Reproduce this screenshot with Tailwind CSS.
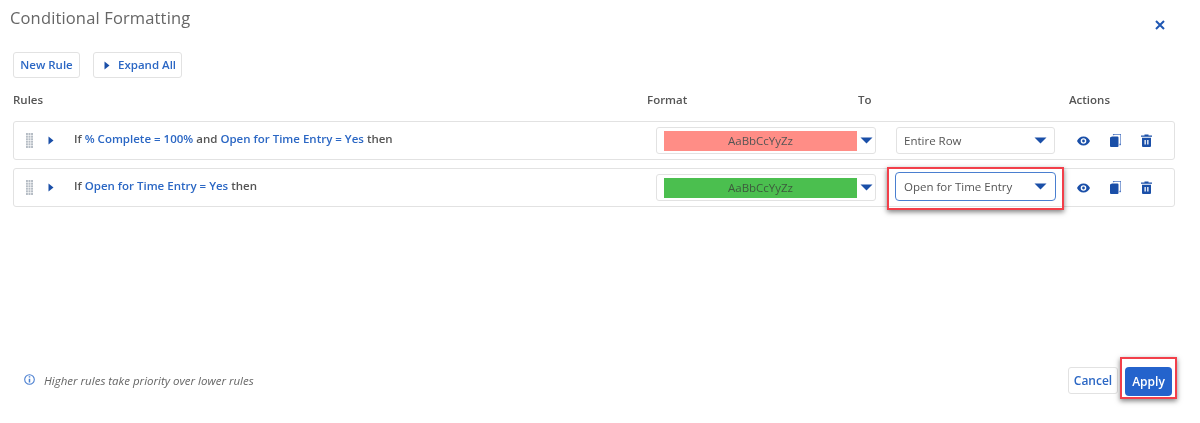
<!DOCTYPE html>
<html>
<head>
<meta charset="utf-8">
<script src="https://cdn.jsdelivr.net/npm/@tailwindcss/browser@4"></script>
</head>
<body class="bg-white">
<div class="relative w-[1200px] h-[423px] overflow-hidden bg-white font-['Open_Sans',sans-serif] text-[#4a4a4a] blur-[0.6px]">
  <header class="flex justify-between h-[52px] pl-[10px] pr-[34px]">
    <h1 class="text-[16.5px] leading-[22px] pt-[7px] text-[#666] font-normal tracking-[0.15px]">Conditional Formatting</h1>
    <svg class="mt-[19px]" width="12" height="12" viewBox="0 0 12 12"><path d="M2 2l8 8M10 2l-8 8" stroke="#1f57b3" stroke-width="2" fill="none"/></svg>
  </header>
  <div class="flex gap-[13px] pl-[13px] h-[26px]">
    <button class="w-[67px] h-[26px] rounded-[3px] border border-[#e2e2e2] text-[11.5px] font-semibold text-[#2b67c4]">New Rule</button>
    <button class="w-[89px] h-[26px] rounded-[3px] border border-[#e2e2e2] text-[11.5px] font-semibold text-[#2b67c4] flex items-center pl-[10px] gap-[8px]">
      <svg width="6" height="9" viewBox="0 0 6 9"><path d="M0.500 0.500L5.500 4.500L0.500 8.500Z" fill="#1a4fa8"/></svg>Expand All
    </button>
  </div>
  <div class="flex h-[43px] items-center pl-[13px] pt-[1px] text-[11.5px] font-semibold text-[#555]">
    <span class="w-[634px]">Rules</span>
    <span class="w-[211px]">Format</span>
    <span class="w-[211px]">To</span>
    <span>Actions</span>
  </div>
  <div class="flex flex-col gap-[8px] pl-[13px] w-[1175px]">
    <div class="flex items-center h-[39px] rounded-[3px] border border-[#e2e2e2]">
      <svg class="ml-[12px]" width="7" height="15" viewBox="0 0 7 15"><path d="M0 0h7v15H0z" fill="#b5bcc4"/><path d="M0 2.500h7M0 5h7M0 7.500h7M0 10h7M0 12.500h7M2.300 0v15M4.600 0v15" stroke="#fff" stroke-width=".6"/></svg>
      <svg class="ml-[15px]" width="6" height="9" viewBox="0 0 6 9"><path d="M0.500 0.500L5.500 4.500L0.500 8.500Z" fill="#1a4fa8"/></svg>
      <p class="w-[602px] pl-[20px] text-[11.5px] font-semibold text-[#555] -mt-[3px]">If <span class="text-[#2b67c4]">% Complete = 100%</span> and <span class="text-[#2b67c4]">Open for Time Entry = Yes</span> then</p>
      <div class="flex items-center w-[220px] h-[27px] rounded-[3px] border border-[#e2e2e2] pl-[7px]">
        <div class="w-[193px] h-[20px] bg-[#ff8d86] text-center text-[11.5px] leading-[20px] text-[#555]">AaBbCcYyZz</div>
        <svg class="ml-[3px]" width="13" height="7" viewBox="0 0 13 7"><path d="M0.500 0.500h12L6.500 6.500Z" fill="#1a4fa8"/></svg>
      </div>
      <div class="flex items-center justify-between ml-[20px] w-[159px] h-[27px] rounded-[3px] border border-[#e2e2e2] pl-[7px] pr-[7px] text-[11.5px] text-[#555]">Entire Row
        <svg width="13" height="7" viewBox="0 0 13 7"><path d="M0.500 0.500h12L6.500 6.500Z" fill="#1a4fa8"/></svg>
      </div>
      <div class="flex items-center ml-[22px] gap-[20px]">
        <svg width="13" height="10" viewBox="0 0 13 10"><path fill-rule="evenodd" d="M6.500 0.500C3.500 0.500 1.200 2.400 0 5c1.200 2.600 3.500 4.500 6.500 4.500S11.800 7.600 13 5C11.800 2.400 9.500 0.500 6.500 0.500zM6.500 7.800a2.800 2.800 0 1 1 0-5.600 2.800 2.800 0 0 1 0 5.600zM6.500 6.400a1.400 1.400 0 1 0 0-2.800 1.400 1.400 0 0 0 0 2.800z" fill="#1a4fa8"/></svg>
        <svg width="11" height="13" viewBox="0 0 11 13"><path d="M0 3.500l2-1h5.500a1 1 0 0 1 1 1V12a1 1 0 0 1-1 1H1a1 1 0 0 1-1-1z" fill="#1a4fa8"/><path d="M3.500 1.200V1a1 1 0 0 1 1-1H10a1 1 0 0 1 1 1v8.500a1 1 0 0 1-1 1h-.6" fill="none" stroke="#4f78c4" stroke-width="1.300"/></svg>
        <svg width="11" height="13" viewBox="0 0 11 13"><path fill-rule="evenodd" d="M0 1.500h3.500V0.500h4v1H11v1.300H0zM1 3.800h9V12a1 1 0 0 1-1 1H2a1 1 0 0 1-1-1zM3.500 6v4.500h1.300V6zM6.200 6v4.500h1.300V6z" fill="#1a4fa8"/></svg>
      </div>
    </div>
    <div class="flex items-center h-[39px] rounded-[3px] border border-[#e2e2e2]">
      <svg class="ml-[12px]" width="7" height="15" viewBox="0 0 7 15"><path d="M0 0h7v15H0z" fill="#b5bcc4"/><path d="M0 2.500h7M0 5h7M0 7.500h7M0 10h7M0 12.500h7M2.300 0v15M4.600 0v15" stroke="#fff" stroke-width=".6"/></svg>
      <svg class="ml-[15px]" width="6" height="9" viewBox="0 0 6 9"><path d="M0.500 0.500L5.500 4.500L0.500 8.500Z" fill="#1a4fa8"/></svg>
      <p class="w-[602px] pl-[20px] text-[11.5px] font-semibold text-[#555] -mt-[3px]">If <span class="text-[#2b67c4]">Open for Time Entry = Yes</span> then</p>
      <div class="flex items-center w-[220px] h-[27px] rounded-[3px] border border-[#e2e2e2] pl-[7px]">
        <div class="w-[193px] h-[20px] bg-[#4bbf4f] text-center text-[11.5px] leading-[20px] text-[#3d5a3d]">AaBbCcYyZz</div>
        <svg class="ml-[3px]" width="13" height="7" viewBox="0 0 13 7"><path d="M0.500 0.500h12L6.500 6.500Z" fill="#1a4fa8"/></svg>
      </div>
      <div class="flex items-center justify-between ml-[19px] w-[161px] h-[29px] -mt-[2px] rounded-[4px] border border-[#4a7fd0] pl-[8px] pr-[8px] text-[11.5px] text-[#555]">Open for Time Entry
        <svg width="13" height="7" viewBox="0 0 13 7"><path d="M0.500 0.500h12L6.500 6.500Z" fill="#1a4fa8"/></svg>
      </div>
      <div class="flex items-center ml-[21px] gap-[20px]">
        <svg width="13" height="10" viewBox="0 0 13 10"><path fill-rule="evenodd" d="M6.500 0.500C3.500 0.500 1.200 2.400 0 5c1.200 2.600 3.500 4.500 6.500 4.500S11.800 7.600 13 5C11.800 2.400 9.500 0.500 6.500 0.500zM6.500 7.800a2.800 2.800 0 1 1 0-5.600 2.800 2.800 0 0 1 0 5.600zM6.500 6.400a1.400 1.400 0 1 0 0-2.800 1.400 1.400 0 0 0 0 2.800z" fill="#1a4fa8"/></svg>
        <svg width="11" height="13" viewBox="0 0 11 13"><path d="M0 3.500l2-1h5.500a1 1 0 0 1 1 1V12a1 1 0 0 1-1 1H1a1 1 0 0 1-1-1z" fill="#1a4fa8"/><path d="M3.500 1.200V1a1 1 0 0 1 1-1H10a1 1 0 0 1 1 1v8.500a1 1 0 0 1-1 1h-.6" fill="none" stroke="#4f78c4" stroke-width="1.300"/></svg>
        <svg width="11" height="13" viewBox="0 0 11 13"><path fill-rule="evenodd" d="M0 1.500h3.500V0.500h4v1H11v1.300H0zM1 3.800h9V12a1 1 0 0 1-1 1H2a1 1 0 0 1-1-1zM3.500 6v4.500h1.300V6zM6.200 6v4.500h1.300V6z" fill="#1a4fa8"/></svg>
      </div>
    </div>
  </div>
  <footer class="flex items-center justify-between mt-[160px] pl-[24px] pr-[28px]">
    <div class="flex items-center gap-[9px] text-[11.5px] italic text-[#666] -mt-[1px]">
      <svg class="-mt-[3px]" width="11" height="11" viewBox="0 0 11 11"><circle cx="5.500" cy="5.500" r="4.800" fill="none" stroke="#4a7fd0" stroke-width="1.100"/><path d="M5.500 2.300v1.300M5.500 4.700v3.800" stroke="#4a7fd0" stroke-width="1.500"/></svg>
      Higher rules take priority over lower rules
    </div>
    <div class="flex items-start gap-[7px]">
      <button class="w-[50px] h-[27px] rounded-[3px] border border-[#e2e2e2] text-[12px] font-semibold text-[#2b67c4]">Cancel</button>
      <button class="w-[47px] h-[29px] rounded-[4px] bg-[#2463cc] text-[12px] font-semibold text-white">Apply</button>
    </div>
  </footer>
  <div class="absolute left-[887px] top-[167px] w-[177px] h-[43px] border-[2.5px] border-[#f23f4a] shadow-[0_2px_5px_rgba(0,0,0,0.5)]"></div>
  <div class="absolute left-[1120px] top-[357px] w-[57px] h-[42px] border-[2.5px] border-[#f23f4a] shadow-[0_2px_5px_rgba(0,0,0,0.5)]"></div>
</div>
</body>
</html>
